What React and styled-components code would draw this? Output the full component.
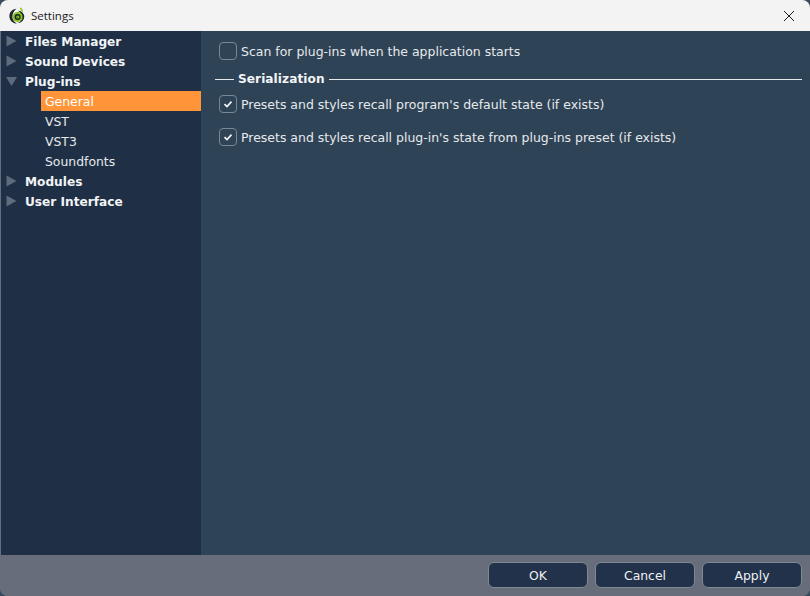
import React from "react";
import styled, { createGlobalStyle } from "styled-components";

const GlobalStyle = createGlobalStyle`
  html, body {
    margin: 0;
    padding: 0;
    height: 100%;
    background: #3a4a5e;
    overflow: hidden;
  }
`;

const TREE = [
  { label: "Files Manager" },
  { label: "Sound Devices" },
  {
    label: "Plug-ins",
    open: true,
    children: [
      { label: "General", selected: true },
      { label: "VST" },
      { label: "VST3" },
      { label: "Soundfonts" },
    ],
  },
  { label: "Modules" },
  { label: "User Interface" },
];

const LogoIcon = () => (
  <svg width="17" height="17" viewBox="0 0 17 17">
    <path d="M7.4 1.8C3 2.2.2 5.4.4 9.4c.2 3.8 3.2 7 7.4 7.2-2.8-1.6-4.6-4.2-4.4-7.2.1-3 1.6-5.6 4-7.6z" fill="#20242c" />
    <path d="M9 3.8a6 6 0 0 1 6.2 6.2c-.2 3.4-3.2 6.4-7 6 3.2-.6 5-3.2 4.8-6-.2-2.6-1.8-4.8-4-6.2z" fill="#20242c" />
    <circle cx="8.6" cy="10" r="5" fill="#7fc31c" />
    <circle cx="8.6" cy="10" r="3" fill="#20242c" />
    <circle cx="8.8" cy="10" r="1.6" fill="#8fd02a" />
    <circle cx="8.8" cy="10" r="0.6" fill="#20242c" />
    <path d="M11 .2c2.4.8 3.4 2.8 2.8 5.2-1.8-.8-3.2-2.8-2.8-5.2z" fill="#97cf3a" />
  </svg>
);

const CloseIcon = () => (
  <svg width="10" height="10" viewBox="0 0 10 10">
    <path d="M0 0L10 10M10 0L0 10" stroke="#1a1a1a" strokeWidth="1" fill="none" />
  </svg>
);

const Arrow = ({ open }) => (
  <ArrowBox>
    <svg width="12" height="12" viewBox="0 0 12 12">
      {open ? <path d="M0 2H11L5.5 11z" fill="#5d6b7c" /> : <path d="M0.5 0.5L10.5 6L0.5 11.5z" fill="#5d6b7c" />}
    </svg>
  </ArrowBox>
);

const Check = () => (
  <svg width="10" height="10" viewBox="0 0 10 10">
    <path d="M1.5 5.2L4 7.6L8.5 2.6" stroke="#f2f4f6" strokeWidth="1.7" fill="none" />
  </svg>
);

const Option = ({ checked, children }) => (
  <OptionRow>
    <Box>{checked && <Check />}</Box>
    <OptionLabel>{children}</OptionLabel>
  </OptionRow>
);

export default function App() {
  return (
    <>
      <GlobalStyle />
      <Window>
        <TitleBar>
          <TitleLeft>
            <LogoIcon />
            <Title>Settings</Title>
          </TitleLeft>
          <CloseButton>
            <CloseIcon />
          </CloseButton>
        </TitleBar>
        <Main>
          <Sidebar>
            {TREE.map((item) => (
              <div key={item.label}>
                <TreeRow>
                  <Arrow open={item.open} />
                  <TreeLabel>{item.label}</TreeLabel>
                </TreeRow>
                {item.children &&
                  item.children.map((child) => (
                    <SubRow key={child.label} $selected={child.selected}>
                      {child.label}
                    </SubRow>
                  ))}
              </div>
            ))}
          </Sidebar>
          <Panel>
            <Option>Scan for plug-ins when the application starts</Option>
            <SectionHead>
              <ShortRule />
              <SectionTitle>Serialization</SectionTitle>
              <LongRule />
            </SectionHead>
            <Options>
              <Option checked>Presets and styles recall program's default state (if exists)</Option>
              <Option checked>Presets and styles recall plug-in's state from plug-ins preset (if exists)</Option>
            </Options>
          </Panel>
        </Main>
        <Footer>
          <Button>OK</Button>
          <Button>Cancel</Button>
          <Button>Apply</Button>
        </Footer>
      </Window>
    </>
  );
}

const Window = styled.div`
  width: 810px;
  height: 596px;
  display: flex;
  flex-direction: column;
  border-radius: 8px;
  overflow: hidden;
  background: #676d7b;
  font-family: "DejaVu Sans", Verdana, sans-serif;
`;

const TitleBar = styled.div`
  height: 31px;
  flex: none;
  display: flex;
  align-items: center;
  justify-content: space-between;
  padding: 0 16px 0 9px;
  background: #f3f3f3;
`;

const TitleLeft = styled.div`
  display: flex;
  align-items: center;
  gap: 5px;
`;

const Title = styled.span`
  font-family: "Open Sans", "Noto Sans", sans-serif;
  font-size: 11.5px;
  color: #1a1a1a;
`;

const CloseButton = styled.div`
  display: flex;
`;

const Main = styled.div`
  flex: 1;
  display: flex;
  min-height: 0;
`;

const Sidebar = styled.div`
  width: 200px;
  margin-left: 1px;
  flex: none;
  background: #1f3046;
`;

const TreeRow = styled.div`
  height: 20px;
  display: flex;
  align-items: center;
  padding-left: 5px;
`;

const ArrowBox = styled.span`
  width: 19px;
  flex: none;
  display: flex;
`;

const TreeLabel = styled.span`
  padding-top: 2px;
  font-size: 12.15px;
  font-weight: 700;
  color: #f2f4f6;
`;

const SubRow = styled.div`
  height: 20px;
  margin-left: 40px;
  padding-left: 4px;
  line-height: 21px;
  font-size: 12.4px;
  color: ${(p) => (p.$selected ? "#ffffff" : "#e6e9ec")};
  background: ${(p) => (p.$selected ? "#ff9538" : "transparent")};
`;

const Panel = styled.div`
  flex: 1;
  padding: 10px 8px 0 14px;
  background: #2f4356;
`;

const Options = styled.div`
  display: flex;
  flex-direction: column;
  gap: 13px;
`;

const OptionRow = styled.div`
  height: 20px;
  display: flex;
  align-items: center;
  gap: 4px;
  padding-left: 4px;
`;

const Box = styled.span`
  width: 16px;
  height: 16px;
  flex: none;
  display: flex;
  align-items: center;
  justify-content: center;
  border: 1px solid #7a8794;
  border-radius: 4px;
`;

const OptionLabel = styled.span`
  font-size: 12.48px;
  color: #e6e9ec;
  white-space: nowrap;
`;

const SectionHead = styled.div`
  height: 20px;
  margin: 8px 0 5px;
  display: flex;
  align-items: center;
  gap: 4px;
`;

const ShortRule = styled.span`
  width: 19px;
  height: 1px;
  background: #e6e9ec;
`;

const LongRule = styled.span`
  flex: 1;
  height: 1px;
  background: #e6e9ec;
`;

const SectionTitle = styled.span`
  font-size: 12.15px;
  letter-spacing: 0.06px;
  font-weight: 700;
  color: #f2f4f6;
`;

const Footer = styled.div`
  height: 41px;
  flex: none;
  display: flex;
  justify-content: flex-end;
  align-items: flex-start;
  gap: 7px;
  padding: 7px 8px 0 0;
  box-sizing: border-box;
  background: #676d7b;
`;

const Button = styled.div`
  width: 100px;
  height: 26px;
  box-sizing: border-box;
  display: flex;
  align-items: center;
  justify-content: center;
  font-size: 12.4px;
  color: #eef0f2;
  background: #22324a;
  border: 1px solid #7d8a92;
  border-radius: 6px;
`;
